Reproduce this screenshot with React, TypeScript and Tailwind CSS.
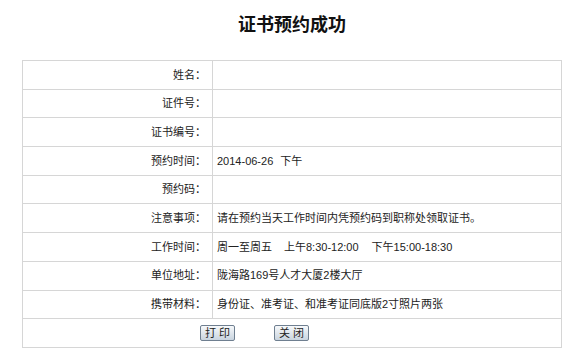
import React from 'react';

const rows: { label: string; value?: React.ReactNode }[] = [
  { label: '姓名：' },
  { label: '证件号：' },
  { label: '证书编号：' },
  {
    label: '预约时间：',
    value: (
      <>
        <span>2014-06-26</span>
        <span className="ml-[7px]">下午</span>
      </>
    ),
  },
  { label: '预约码：' },
  { label: '注意事项：', value: '请在预约当天工作时间内凭预约码到职称处领取证书。' },
  {
    label: '工作时间：',
    value: (
      <>
        <span>周一至周五</span>
        <span className="ml-[12px]">上午8:30-12:00</span>
        <span className="ml-[13px]">下午15:00-18:30</span>
      </>
    ),
  },
  { label: '单位地址：', value: '陇海路169号人才大厦2楼大厅' },
  { label: '携带材料：', value: '身份证、准考证、和准考证同底版2寸照片两张' },
];

const Btn: React.FC<{ text: string }> = ({ text }) => (
  <button className="h-[16px] w-[35px] border border-[#6f7f90] rounded-[2px] bg-gradient-to-b from-[#f7f9fb] to-[#c9d4df] text-[11px] leading-[14px] text-[#222] tracking-[3px] pl-[3px]">
    {text}
  </button>
);

export default function App() {
  return (
    <div className="w-[574px] h-[359px] bg-white text-[#222] font-['Liberation_Sans','Noto_Sans_CJK_SC',sans-serif]">
      <div className="ml-[22px] w-[540px]">
        <div className="h-[60px] flex justify-center pt-[14px]">
          <h1 className="text-[18px] leading-[22px] font-bold text-[#111]">证书预约成功</h1>
        </div>
        <div className="border-l border-r border-t border-[#d6d6d6]">
          {rows.map((r) => (
            <div key={r.label} className="flex h-[28.7px] border-b border-[#d6d6d6] text-[11px]">
              <div className="w-[190px] shrink-0 border-r border-[#d6d6d6] flex items-center justify-end pr-[6px]">
                {r.label}
              </div>
              <div className="flex-1 flex items-center pl-[4px]">{r.value}</div>
            </div>
          ))}
          <div className="flex h-[28.7px] items-center border-b border-[#d6d6d6] pl-[177px] gap-[39px]">
            <Btn text="打印" />
            <Btn text="关闭" />
          </div>
        </div>
      </div>
    </div>
  );
}
